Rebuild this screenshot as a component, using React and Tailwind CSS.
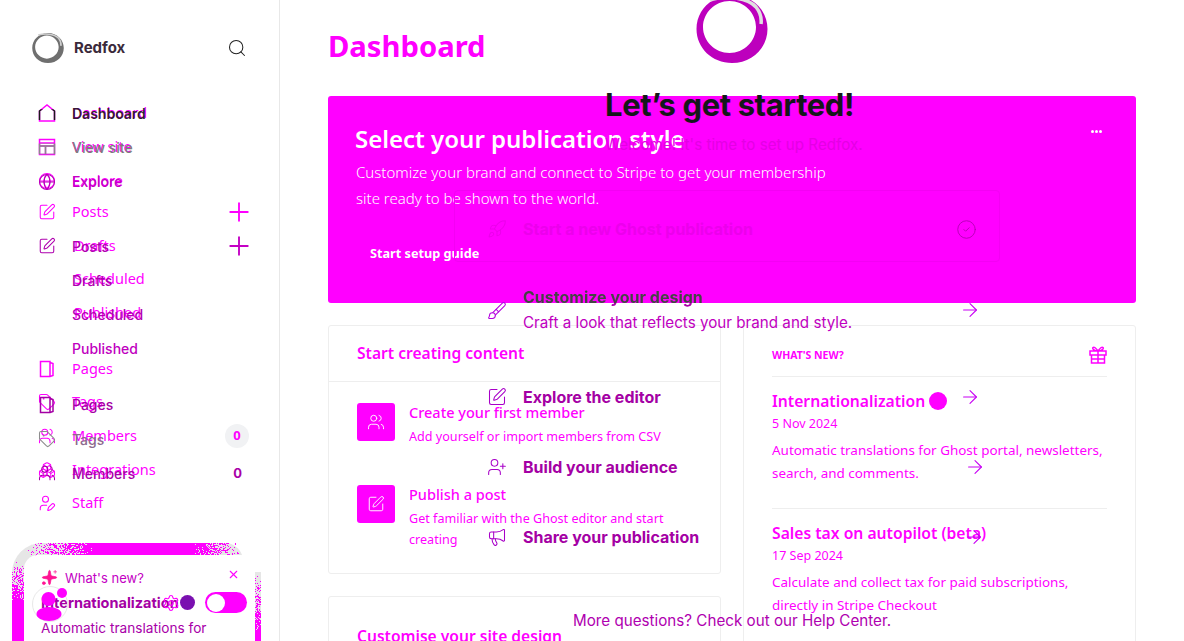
import React from 'react';
import { ArrowRight, Boxes, Brush, CircleCheck, Globe, Megaphone, Plus, Rocket, Search, Settings, Sparkles, SquarePen, Tag, UserPen, UserPlus, Users, X } from 'lucide-react';

const baseTop = [
  { name: 'Dashboard', icon: 'home' },
  { name: 'View site', icon: 'site' },
  { name: 'Explore', icon: Globe },
];
const basePosts = ['Drafts', 'Scheduled', 'Published'];
const baseRest = [
  { name: 'Pages', icon: 'pages' },
  { name: 'Tags', icon: Tag },
  { name: 'Members', icon: Users, badge: true },
  { name: 'Integrations', icon: Boxes },
  { name: 'Staff', icon: UserPen },
];

const overlayNav = [
  { name: 'Dashboard', icon: 'home', color: 'text-[#351a35]', weight: 'font-semibold', iconColor: 'text-[#1b1b1b] [clip-path:inset(28%_0_12%_0)]' },
  { name: 'View site', icon: 'site', color: 'text-[#7d7d7d]', iconColor: 'text-[#8a8a8a] [clip-path:inset(28%_0_12%_0)]' },
  { name: 'Explore', icon: Globe, color: 'text-[#c400c4]', iconColor: 'text-[#b800b8]', gapAfter: true },
  { name: 'Posts', icon: SquarePen, color: 'text-[#ae00ae]', iconColor: 'text-[#ae00ae]', plus: true },
  { name: 'Drafts', color: 'text-[#ae00ae]' },
  { name: 'Scheduled', color: 'text-[#b300b3]' },
  { name: 'Published', color: 'text-[#c000c0]', gapAfterLarge: true },
  { name: 'Pages', icon: 'pages', color: 'text-[#a400a4]', iconColor: 'text-[#a400a4]' },
  { name: 'Tags', icon: Tag, color: 'text-[#8d6a8d]', iconColor: 'text-[#8d8d8d]' },
  { name: 'Members', icon: Users, color: 'text-[#a800a8]', iconColor: 'text-[#a800a8]', count: true },
];

const steps = [
  { title: 'Customize your design', sub: 'Craft a look that reflects your brand and style.', icon: Brush, arrow: 'ml-[107px] mt-[14px]' },
  { title: 'Explore the editor', icon: SquarePen, arrow: 'ml-[298px]' },
  { title: 'Build your audience', icon: UserPlus, arrow: 'ml-[286px]' },
  { title: 'Share your publication', icon: Megaphone, arrow: 'ml-[264px]' },
];

// dither of the card's top edge, magenta thinning out into grey at the corners
const ditherPath = (() => {
  let seed = 7;
  const next = () => {
    seed = (seed * 1103515245 + 12345) % 2147483648;
    return seed / 2147483648;
  };
  let d = '';
  for (let y = 0; y < 98; y++) {
    for (let x = 0; x < 249; x++) {
      let p = 0;
      if (y < 13 && x < 231) p = Math.min((x - 14) / 70, (231 - x) / 50);
      else if (x < 12) p = (y - 18) / 42;
      else if (x >= 243 && y > 29) p = (y - 29) / 60;
      if (next() < p) d += `M${x} ${y}h1v1h-1z`;
    }
  }
  return d;
})();

const NavIcon = ({ icon, className }) => {
  if (icon === 'home') {
    return (
      <svg width="18" height="18" viewBox="0 0 18 18" fill="none" stroke="currentColor" strokeWidth="1.5" className={className}>
        <path d="M1.500 7 9 1l7.500 6v10h-15z" />
      </svg>
    );
  }
  if (icon === 'site') {
    return (
      <svg width="18" height="18" viewBox="0 0 18 18" fill="none" stroke="currentColor" strokeWidth="1.5" className={className}>
        <path d="M1.500 1.500h15v15h-15zM1.500 5h15M1.500 8h15M7.500 8v8.500" />
      </svg>
    );
  }
  if (icon === 'pages') {
    return (
      <svg width="18" height="18" viewBox="0 0 18 18" fill="none" stroke="currentColor" strokeWidth="1.500" className={className}>
        <path d="M2.500 1.500h9.500v15H2.500zM12 2.500l3 1v12l-3 1" />
      </svg>
    );
  }
  if (!icon) return <span className="w-[18px]" />;
  const Icon = icon;
  return <Icon size={18} strokeWidth={1.4} className={className} />;
};

const Ring = ({ size, fill, highlight, className }) => (
  <svg width={size} height={size} viewBox="0 0 72 72" className={className}>
    <path fillRule="evenodd" fill={fill} d="M36 2c20 0 35.500 15 35.500 34S56 70 36 70 .5 55 .5 36 16 2 36 2zm-2.500 6C19 8 7 20 7 34s12 26 26.500 26S60 48 60 34 48 8 33.500 8z" />
    <path d="M14 7C26 3 50 3 60 14c4 5 6 10 5 17" fill="none" stroke={highlight} strokeWidth="3.500" />
  </svg>
);

const WhatsNewCard = () => (
  <div className="relative ml-[12px] mt-[23px] h-[98px] w-[249px] pl-[12px] pt-[12px]">
    <div className="absolute left-0 top-0 h-full w-[231px] rounded-tl-[30px] rounded-tr-[18px] bg-[#e6e6e6]" />
    <div className="absolute bottom-0 right-0 top-[29px] w-[6px] bg-[#e6e6e6]" />
    <svg width="249" height="98" className="absolute left-0 top-0 rounded-tl-[30px] fill-[#ff00ff]">
      <path d={ditherPath} />
    </svg>
    <div className="relative h-full w-[231px] rounded-t-[14px] bg-white px-[17px] pt-[14px] font-['Inter',sans-serif]">
      <div className="flex h-[18px] items-center">
        <Sparkles size={17} fill="currentColor" strokeWidth={1} className="text-[#ff1493]" />
        <span className="ml-[7px] mt-[1px] text-[13px] text-[#c400c4]">What's new?</span>
        <X size={13} className="-mr-[2px] -mt-[6px] ml-auto text-[#ff00ff]" />
      </div>
      <div className="mt-[6px] flex h-[20px] items-center whitespace-nowrap">
        <span className="text-[14.500px] font-bold text-[#a400a4]">Internationalization</span>
        <Settings size={18} strokeWidth={1.5} className="-ml-[17px] shrink-0 text-[#ff00ff]" />
        <span className="h-[15px] w-[15px] shrink-0 rounded-full bg-[#7a10b0]" />
        <span className="ml-[10px] flex h-[21px] w-[42px] shrink-0 items-center rounded-full bg-[#ff00ff] pl-[2px]">
          <span className="h-[18px] w-[18px] rounded-full bg-white" />
        </span>
      </div>
      <p className="mt-[5px] whitespace-nowrap text-[13.650px] text-[#a800a8]">Automatic translations for</p>
      <div className="absolute left-[8px] top-[31px] h-[36px] w-[36px] rounded-full border border-[#e8e8e8]" />
      <svg width="34" height="36" viewBox="0 0 34 36" className="absolute left-[9px] top-[33px] fill-[#ff00ff]">
        <circle cx="15.500" cy="11" r="7" />
        <ellipse cx="16" cy="26" rx="12.500" ry="7" />
        <circle cx="29" cy="5" r="5" />
      </svg>
    </div>
  </div>
);

const Sidebar = () => (
  <aside className="h-[641px] w-[280px] shrink-0 border-r border-[#e8e8e8] font-['Noto_Sans',sans-serif] text-[#ff00ff]">
    <div className="flex h-[96px] items-center pl-[32px] pr-[32px]">
      <Ring size={32} fill="#6f6f6f" highlight="#cfcfcf" />
      <span className="ml-[10px] font-['Inter',sans-serif] text-[15px] font-bold text-[#3b2a3b]">Redfox</span>
      <Search size={20} strokeWidth={1.25} className="ml-auto text-[#222]" />
    </div>
    <nav className="pl-[38px] pr-[31px] text-[14.5px]">
      {baseTop.map(item => (
        <div key={item.name} className="flex h-[34px] items-center gap-[16px]">
          <NavIcon icon={item.icon} />
          {item.name}
        </div>
      ))}
      <div className="-mt-[3px] flex h-[33.6px] items-center gap-[16px]">
        <SquarePen size={18} strokeWidth={1.4} />
        Posts
        <Plus size={30} strokeWidth={1.5} className="-mr-[6px] ml-auto" />
      </div>
      {basePosts.map(name => (
        <div key={name} className="flex h-[33.6px] items-center pl-[36px]">{name}</div>
      ))}
      <div className="h-[22.600px]" />
      {baseRest.map(item => (
        <div key={item.name} className="flex h-[33.6px] items-center gap-[16px]">
          <NavIcon icon={item.icon} />
          {item.name}
          {item.badge && (
            <span className="ml-auto mr-[-1px] flex h-[24px] w-[24px] items-center justify-center rounded-full bg-[#f1f2f4] text-[13px] font-bold">0</span>
          )}
        </div>
      ))}
    </nav>
    <WhatsNewCard />
  </aside>
);

const ContentRow = ({ icon: Icon, title, sub }) => (
  <div className="flex h-[82px] gap-[14px]">
    <span className="flex h-[38px] w-[38px] shrink-0 items-center justify-center rounded-[3px] bg-[#ff00ff]">
      <Icon size={18} strokeWidth={1.25} className="text-white" />
    </span>
    <div className="-mt-[1px]">
      <p className="text-[14.5px] font-medium leading-[20px]">{title}</p>
      <p className="mt-[4px] text-[12.6px] leading-[21px]">{sub}</p>
    </div>
  </div>
);

const NewsItem = ({ title, date, lines, dot }) => (
  <div className="h-[132px] border-t border-[#eee] pt-[12px]">
    <div className="flex items-center">
      <h3 className="text-[15.7px] font-semibold leading-[24px]">{title}</h3>
      {dot && <span className="ml-[4px] h-[18px] w-[18px] rounded-full bg-[#ff00ff]" />}
    </div>
    <p className="mt-[1px] text-[12.5px] leading-[20px]">{date}</p>
    <p className="mt-[5px] whitespace-nowrap text-[13.45px] leading-[23px]">{lines[0]}<br />{lines[1]}</p>
  </div>
);

const GiftIcon = () => (
  <svg width="18" height="18" viewBox="0 0 18 18" fill="none" stroke="currentColor" strokeWidth="1.5" className="-mt-[2px]">
    <path d="M1 5h16v4H1zM2.500 9h13v8h-13zM9 5v12M2.500 13h13M9 5C7 2 5 .5 4 1.500S5 5 9 5zm0 0c2-3 4-4.500 5-3.500S13 5 9 5z" />
  </svg>
);

const Main = () => (
  <main className="min-w-0 flex-1 px-[48px] font-['Noto_Sans',sans-serif] text-[#ff00ff]">
    <h1 className="flex h-[96px] items-center pb-[3px] text-[29.2px] font-bold">Dashboard</h1>
    <section className="relative h-[207px] rounded-[3px] bg-[#ff00ff] pl-[27px] pt-[25px] text-white">
      <h2 className="text-[24px] font-semibold leading-[36px]">Select your publication style</h2>
      <p className="ml-[1px] mt-[2px] text-[15px] font-light leading-[26px]">
        Customize your brand and connect to Stripe to get your membership<br />site ready to be shown to the world.
      </p>
      <button className="ml-[15px] mt-[33px] text-[12.7px] font-bold">Start setup guide</button>
      <span className="absolute right-[34px] top-[34px] flex gap-[1px]">
        <i className="h-[3px] w-[3px] rounded-full bg-white" />
        <i className="h-[3px] w-[3px] rounded-full bg-white" />
        <i className="h-[3px] w-[3px] rounded-full bg-white" />
      </span>
    </section>
    <div className="mt-[22px] grid grid-cols-[393px_393px] gap-[22px]">
      <div>
        <div className="h-[249px] rounded-[3px] border border-[#eee]">
          <h2 className="flex h-[56px] items-center border-b border-[#eee] pl-[28px] pt-[1px] text-[15.6px] font-semibold">Start creating content</h2>
          <div className="px-[28px] pt-[21px]">
            <ContentRow icon={Users} title="Create your first member" sub="Add yourself or import members from CSV" />
            <ContentRow icon={SquarePen} title="Publish a post" sub={<>Get familiar with the Ghost editor and start<br />creating</>} />
          </div>
        </div>
        <div className="mt-[22px] h-[80px] rounded-[3px] border border-[#eee] pl-[28px] pt-[28px] text-[15.6px] font-semibold">Customise your site design</div>
      </div>
      <div className="h-[340px] rounded-[3px] border border-[#eee] px-[28px]">
        <div className="flex h-[50px] items-center justify-between pt-[10px]">
          <span className="text-[10.5px] font-bold">WHAT'S NEW?</span>
          <GiftIcon />
        </div>
        <NewsItem dot title="Internationalization" date="5 Nov 2024" lines={['Automatic translations for Ghost portal, newsletters,', 'search, and comments.']} />
        <NewsItem title="Sales tax on autopilot (beta)" date="17 Sep 2024" lines={['Calculate and collect tax for paid subscriptions,', 'directly in Stripe Checkout']} />
      </div>
    </div>
  </main>
);

// second page that sits on top of the dashboard
const OverlaySidebar = () => (
  <nav className="absolute left-0 top-[96px] w-[279px] pl-[38px] pr-[31px] font-['Inter',sans-serif] text-[14px]">
    {overlayNav.map(item => (
      <React.Fragment key={item.name}>
        <div className="flex h-[34.3px] items-center gap-[16px]">
          <NavIcon icon={item.icon} className={item.iconColor} />
          <span className={`${item.color} ${item.weight || 'font-medium'}`}>{item.name}</span>
          {item.plus && <Plus size={30} strokeWidth={1.5} className="-mr-[6px] ml-auto text-[#c400c4]" />}
          {item.count && <span className="ml-auto mr-[6px] text-[13px] font-bold text-[#a800a8]">0</span>}
        </div>
        {item.gapAfter && <div className="h-[30px]" />}
        {item.gapAfterLarge && <div className="h-[21.500px]" />}
      </React.Fragment>
    ))}
  </nav>
);

const Onboarding = () => (
  <div className="absolute left-[454px] top-[-7px] flex w-[556px] flex-col font-['Inter',sans-serif]">
    <div className="flex justify-center pr-[1px]">
      <Ring size={72} fill="#bd00bd" highlight="#e0e0e0" />
    </div>
    <h2 className="mt-[17px] pl-[151px] text-[31px] font-bold leading-[46px] tracking-[-0.4px] text-[#15171a]">Let’s get started!</h2>
    <p className="mt-[5px] pl-[151px] text-[15.2px] leading-[24px] text-[#e400e4]">Welcome! It's time to set up Redfox.</p>
    <div className="mt-[33px] flex h-[72px] w-[546px] items-center rounded-[4px] border border-[#f400f4] pl-[32px] pt-[6px] text-[#ec00ec]">
      <Rocket size={20} strokeWidth={1.25} />
      <span className="ml-[16px] text-[16px] font-bold">Start a new Ghost publication</span>
      <CircleCheck size={21} strokeWidth={1} className="ml-auto mr-[22px] text-[#b000b0]" />
    </div>
    {steps.map((step, i) => (
      <div key={step.title} className={`flex pl-[33px] ${i === 0 ? 'mt-[23px] h-[49px]' : 'h-[70px] items-center'} ${i === 1 ? 'mt-[28px]' : ''}`}>
        <step.icon size={20} strokeWidth={1.25} className={i === 0 ? 'mt-[16px] text-[#b400e0]' : 'text-[#a800c8]'} />
        <div className="ml-[16px]">
          <p className={`text-[16px] font-bold leading-[24px] ${i === 0 ? 'bg-[linear-gradient(#444_75%,#a800a8_75%)] bg-clip-text text-transparent' : 'text-[#a400a4]'}`}>{step.title}</p>
          {step.sub && <p className="mt-[3px] whitespace-nowrap text-[15.2px] text-[#c000c0]">{step.sub}</p>}
        </div>
        <ArrowRight size={22} strokeWidth={1.2} className={`text-[#c800f4] ${step.arrow}`} />
      </div>
    ))}
    <p className="ml-[119px] mt-[38px] whitespace-nowrap text-[15.2px] text-[#b000b0]">More questions? Check out our Help Center.</p>
  </div>
);

const App = () => {
  return (
    <div className="relative h-[641px] w-[1184px] overflow-hidden bg-white">
      <div className="flex">
        <Sidebar />
        <Main />
      </div>
      <OverlaySidebar />
      <Onboarding />
    </div>
  );
};

export default App;
